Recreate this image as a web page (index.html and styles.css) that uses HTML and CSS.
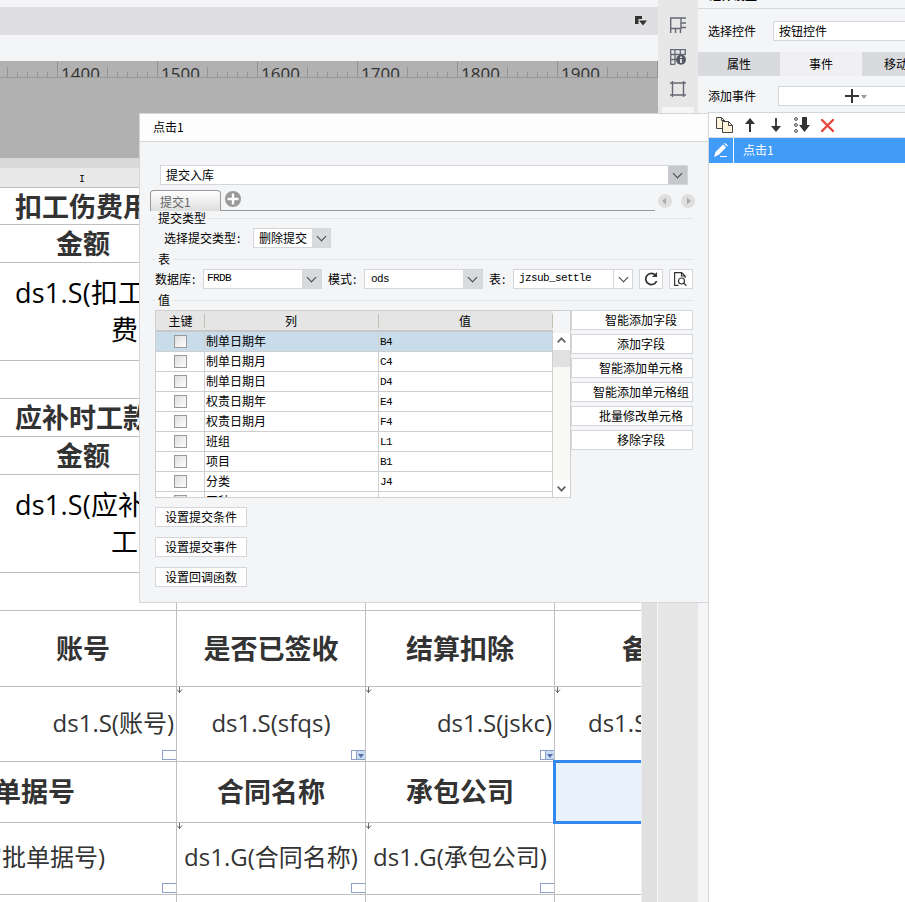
FILE: index.html
```html
<!DOCTYPE html>
<html lang="zh-CN">
<head>
<meta charset="utf-8">
<title>点击1</title>
<link rel="stylesheet" href="styles.css">
</head>
<body>
<div class="app">
  <main class="designer">
    <div class="strip-top"></div>
    <div class="strip-tools">
      <svg width="14" height="12" viewBox="0 0 14 12"><path d="M1 1h7v3H4.500V9H1z" fill="#333"/><path d="M5 5.500h8L9 10.500z" fill="#333"/></svg>
    </div>
    <div class="strip-gap"></div>
    <div class="ruler">
      <span>1400</span><span>1500</span><span>1600</span><span>1700</span><span>1800</span><span>1900</span>
    </div>
    <div class="canvas-gap"></div>
    <div class="sheet-edge"></div>
    <div class="column-head">I</div>
    <div class="sheet-wrap">
      <div class="sheet">
        <div class="row r37"><b class="from-left">扣工伤费用</b></div>
        <div class="row r38"><b class="amount">金额</b></div>
        <div class="row r98 formula"><p>ds1.S(扣工伤</p><p class="second">费)</p></div>
        <div class="row r38"></div>
        <div class="row r38"><b class="from-left">应补时工款</b></div>
        <div class="row r38"><b class="amount">金额</b></div>
        <div class="row r98 formula"><p>ds1.S(应补时</p><p class="second">工)</p></div>
        <div class="row r38 cols"><i></i><i></i><i></i><i></i></div>
        <div class="row r76 cols">
          <div class="cell shift"><b>账号</b></div><div class="cell"><b>是否已签收</b></div><div class="cell"><b>结算扣除</b></div><div class="cell"><b>备注</b></div>
        </div>
        <div class="row r75 cols value-row">
          <div class="cell right">ds1.S(账号)<span class="widget"></span></div>
          <div class="cell">ds1.S(sfqs)<svg class="expand" width="6" height="6"><path d="M2.500 0v6M0 2.500L2.500 5.500l2.500-3" fill="none" stroke="#666"/></svg><span class="widget drop"></span></div>
          <div class="cell right">ds1.S(jskc)<svg class="expand" width="6" height="6"><path d="M2.500 0v6M0 2.500L2.500 5.500l2.500-3" fill="none" stroke="#666"/></svg><span class="widget drop"></span></div>
          <div class="cell note">ds1.S(bz)<svg class="expand" width="6" height="6"><path d="M2.500 0v6M0 2.500L2.500 5.500l2.500-3" fill="none" stroke="#666"/></svg></div>
        </div>
        <div class="row r61 cols">
          <div class="cell bill"><b>单据号</b></div><div class="cell"><b>合同名称</b></div><div class="cell"><b>承包公司</b></div><div class="cell selected"></div>
        </div>
        <div class="row r72 cols value-row">
          <div class="cell bill-value">审批单据号)<span class="widget"></span></div>
          <div class="cell">ds1.G(合同名称)<svg class="expand" width="6" height="6"><path d="M2.500 0v6M0 2.500L2.500 5.500l2.500-3" fill="none" stroke="#666"/></svg><span class="widget"></span></div>
          <div class="cell">ds1.G(承包公司)<svg class="expand" width="6" height="6"><path d="M2.500 0v6M0 2.500L2.500 5.500l2.500-3" fill="none" stroke="#666"/></svg><span class="widget"></span></div>
          <div class="cell"></div>
        </div>
        <div class="row cols rest"><i></i><i></i><i></i><i></i></div>
      </div>
      <div class="sheet-scroll"></div>
    </div>
  </main>

  <aside class="rail">
    <svg width="16" height="17" viewBox="0 0 16 17" fill="none" stroke="#666974" stroke-width="1.400"><path d="M.7 16V1H16M11 1v11M.7 11.500H11M5.500 11.500V16M10.500 12v4M11 6h5M11 10.500h5"/></svg>
    <svg width="16" height="16" viewBox="0 0 16 16" fill="none" stroke="#666974" stroke-width="1.300"><path d="M5 15.300H.7V.7h14.600V6M.7 5.500h14.600M.7 10.500H6M5 .7v14.600M10.300.7V5"/><circle cx="11" cy="10.800" r="5" fill="#555862" stroke="none"/><path d="M11 7.500v1.400M11 10v4" stroke="#fff" stroke-width="1.600"/></svg>
    <svg width="16" height="16" viewBox="0 0 16 16" fill="none" stroke="#666974" stroke-width="1.400"><path d="M2.500 0v16M13.500 0v16M0 2h16M0 14h16"/></svg>
    <div class="rail-slot"></div>
  </aside>

  <aside class="panel">
    <div class="panel-title">组件设置</div>
    <div class="prop"><label>选择控件</label><div class="field control">按钮控件</div></div>
    <nav class="tabs"><span>属性</span><span class="on">事件</span><span class="cut">移动端</span></nav>
    <div class="prop add"><label>添加事件</label><div class="field plus"><svg width="22" height="14" viewBox="0 0 22 14"><path d="M0 7h14M7 0v14" stroke="#333" stroke-width="2"/><path d="M16 6h6l-3 4z" fill="#999"/></svg></div></div>
    <div class="events">
      <div class="event-tools">
        <svg width="17" height="16" viewBox="0 0 17 16" fill="#fff5dc" stroke="#444"><path d="M.5.5h5l3 3v8h-8z"/><path d="M5.500.5v3h3" fill="none"/><path d="M6.500 4.500h6l4 4v7h-10z"/><path d="M12.500 4.500v4h4" fill="none"/></svg>
        <svg class="up" width="10" height="14" viewBox="0 0 10 14"><path d="M5 2v12" stroke="#333" stroke-width="2"/><path d="M5 0l5 6H0z" fill="#333"/></svg>
        <svg class="down" width="10" height="14" viewBox="0 0 10 14"><path d="M5 0v12" stroke="#333" stroke-width="1.800"/><path d="M5 14L0 8h10z" fill="#333"/></svg>
        <svg class="bottom" width="16" height="16" viewBox="0 0 16 16"><g fill="none" stroke="#444"><circle cx="2" cy="2" r="1.400"/><circle cx="2" cy="8" r="1.400"/><circle cx="2" cy="14" r="1.400"/></g><path d="M8 0h5v8h3l-5.500 7L5 8h3z" fill="#333"/></svg>
        <svg class="remove" width="13" height="13" viewBox="0 0 13 13"><path d="M1 1l11 11M12 1L1 12" stroke="#e8463c" stroke-width="2.400" stroke-linecap="round"/></svg>
      </div>
      <div class="event">
        <span class="edit"><svg width="14" height="14" viewBox="0 0 14 14"><path d="M0 14l1.500-5L9 1.500l3 3L4.500 12z" fill="#fff"/><path d="M10 .8l1-.8 3 2.500-1 1z" fill="#fff"/><path d="M6 13.500h7" stroke="#fff"/></svg></span>
        <span class="name">点击1</span>
      </div>
    </div>
  </aside>

  <section class="dialog">
    <header>点击1</header>
    <div class="select wide"><span>提交入库</span><em></em></div>
    <div class="tab-strip">
      <span class="tab">提交1</span>
      <div class="tab-line"><svg width="16" height="16" viewBox="0 0 16 16"><circle cx="8" cy="8" r="8" fill="#999"/><path d="M2.500 8h11M8 2.500v11" stroke="#fff" stroke-width="2.400"/></svg></div>
      <svg class="nav prev" width="14" height="14" viewBox="0 0 14 14"><circle cx="7" cy="7" r="7" fill="#dfdfdf"/><path d="M8 3.500v7L4 7z" fill="#aaa"/></svg>
      <svg class="nav" width="14" height="14" viewBox="0 0 14 14"><circle cx="7" cy="7" r="7" fill="#dfdfdf"/><path d="M6 3.500v7L10 7z" fill="#aaa"/></svg>
    </div>
    <div class="legend"><span>提交类型</span></div>
    <div class="line type-line"><label>选择提交类型<s>:</s></label><div class="select type"><span>删除提交</span><em></em></div></div>
    <div class="legend second-legend"><span>表</span></div>
    <div class="line db-line">
      <label>数据库<s>:</s></label><div class="select db"><span class="mono">FRDB</span><em></em></div>
      <label class="mode">模式<s>:</s></label><div class="select schema"><span class="mono">ods</span><em></em></div>
      <label class="table-label">表<s>:</s></label><div class="select tbl"><span class="mono">jzsub_settle</span><em></em></div>
      <button><svg width="14" height="14" viewBox="0 0 14 14"><path d="M11.500 3.200A5.600 5.600 0 1 0 12.600 9" fill="none" stroke="#333" stroke-width="1.700"/><path d="M13 0v5H8z" fill="#333"/></svg></button>
      <button class="preview"><svg width="13" height="14" viewBox="0 0 13 14" fill="none" stroke="#333" stroke-width="1.200"><path d="M4.500 13.400H.6V.6h7l3.500 3.500v2M7.500.5V4H11"/><circle cx="7.500" cy="9" r="3"/><path d="M9.500 11l3 2.700"/></svg></button>
    </div>
    <div class="legend third-legend"><span>值</span></div>
    <div class="values">
      <div class="table">
        <div class="grid">
          <div class="tr th"><span>主键</span><span>列</span><span>值</span></div>
          <div class="tr active"><span><u></u></span><span>制单日期年</span><span>B4</span></div>
          <div class="tr"><span><u></u></span><span>制单日期月</span><span>C4</span></div>
          <div class="tr"><span><u></u></span><span>制单日期日</span><span>D4</span></div>
          <div class="tr"><span><u></u></span><span>权责日期年</span><span>E4</span></div>
          <div class="tr"><span><u></u></span><span>权责日期月</span><span>F4</span></div>
          <div class="tr"><span><u></u></span><span>班组</span><span>L1</span></div>
          <div class="tr"><span><u></u></span><span>项目</span><span>B1</span></div>
          <div class="tr"><span><u></u></span><span>分类</span><span>J4</span></div>
          <div class="tr"><span><u></u></span><span>工种</span><span></span></div>
        </div>
        <div class="scroll">
          <div class="scroll-head"></div>
          <div class="arrow"><svg width="9" height="6" viewBox="0 0 9 6"><path d="M.7 5.300l3.800-4 3.800 4" fill="none" stroke="#666" stroke-width="1.800"/></svg></div>
          <div class="thumb"></div>
          <div class="track"></div>
          <div class="arrow"><svg width="9" height="6" viewBox="0 0 9 6"><path d="M.7.700l3.800 4 3.800-4" fill="none" stroke="#666" stroke-width="1.800"/></svg></div>
        </div>
      </div>
      <div class="actions">
        <button>智能添加字段</button><button>添加字段</button><button>智能添加单元格</button><button>智能添加单元格组</button><button>批量修改单元格</button><button>移除字段</button>
      </div>
    </div>
    <div class="settings"><button>设置提交条件</button><button>设置提交事件</button><button>设置回调函数</button></div>
  </section>
</div>
</body>
</html>
```
FILE: styles.css
```css
* { box-sizing: border-box; }
body { margin: 0; overflow: hidden; font: 12px/14px "Noto Sans CJK SC", sans-serif; color: #000; }
svg { display: block; flex: none; }
p { margin: 0; }
.app { position: relative; display: flex; width: 905px; height: 902px; overflow: hidden; background: #f4f5f7; }

.designer { width: 658px; flex: none; display: flex; flex-direction: column; }
.strip-top { height: 7px; background: #f4f4f7; }
.strip-tools { height: 28px; background: #dfdfe1; display: flex; justify-content: flex-end; padding: 8px 10px 0 0; }
.strip-gap { height: 26px; background: #f4f5f7; }
.ruler {
  height: 17px; overflow: hidden; padding-left: 61px; display: flex; border-bottom: 1px solid #999;
  background:
    repeating-linear-gradient(90deg, #949494 0 1px, transparent 1px 100px) 57px 0 / 601px 16px no-repeat,
    repeating-linear-gradient(90deg, #949494 0 1px, transparent 1px 50px) 7px 6px / 651px 10px no-repeat,
    repeating-linear-gradient(90deg, #949494 0 1px, transparent 1px 10px) 7px 11px / 651px 5px no-repeat,
    #b1b1b1;
}
.ruler span { flex: none; width: 100px; font: 500 17px/17px "Open Sans", sans-serif; padding-top: 4px; color: #333; }
.canvas-gap { height: 80px; background: #b1b1b1; }
.sheet-edge { height: 10px; background: #d9d9d9; }
.column-head { height: 20px; background: #e8e8e8; border-bottom: 1px solid #bfbfbf; padding: 6px 0 0 79px; font: 10px/12px "Liberation Mono", monospace; }
.sheet-wrap { flex: 1; display: flex; min-height: 0; }
.sheet { width: 641px; flex: none; overflow: hidden; background: #fff; font: 24px/36px "Open Sans", "Noto Sans CJK SC", sans-serif; color: #333; }
.sheet b { font-size: 27px; font-weight: 700; line-height: 38px; white-space: nowrap; }
.sheet-scroll { width: 17px; background: #e0e0e0; border-left: 1px solid #eee; border-right: 1px solid #f7f7f7; }
.row { border-bottom: 1px solid #bfbfbf; white-space: nowrap; overflow: hidden; }
.r37 { height: 37px; } .r38 { height: 38px; } .r98 { height: 98px; } .r76 { height: 76px; }
.r75 { height: 75px; } .r61 { height: 61px; } .r72 { height: 72px; } .rest { height: 10px; }
.from-left { margin-left: 15px; }
.amount { margin-left: 56px; }
.formula { padding: 12px 0 0 15px; font-size: 27px; letter-spacing: .2px; color: #000; }
.formula p { height: 37px; }
.formula .second { padding-left: 96px; }
.cols { display: grid; grid-template-columns: 177px 189px 189px 189px; overflow: visible; }
.cols > * { border-right: 1px solid #bfbfbf; }
.cell { position: relative; display: flex; align-items: center; justify-content: center; min-width: 0; }
.value-row .cell { padding-bottom: 3px; }
.cell.right { justify-content: flex-end; padding-right: 2px; }
.cell.shift { justify-content: flex-end; padding-right: 66px; }
.cell.note { justify-content: flex-start; padding-left: 33px; }
.cell.bill { justify-content: flex-start; margin-left: -6px; }
.cell.bill-value { justify-content: flex-start; margin-left: -22px; }
.selected { background: #e8f2fc; border: 3px solid #3388f0 !important; margin: -2px 0 -2px -2px; z-index: 1; }
.expand { position: absolute; left: 0; top: 0; }
.widget { position: absolute; right: 0; bottom: 1px; width: 14px; height: 10px; border: 1px solid #8aa0c8; border-right: 0; background: #fff; }
.drop::before { content: ""; position: absolute; right: 0; top: 0; width: 8px; height: 8px; background: #c9daf3; border-left: 1px solid #8aa0c8; }
.drop::after { content: ""; position: absolute; right: 1px; top: 3px; border: 3px solid transparent; border-top: 4px solid #5870a8; border-bottom: 0; }

.rail { width: 40px; flex: none; background: #e7e7e8; display: flex; flex-direction: column; align-items: center; padding-top: 17px; gap: 16px; }
.rail svg:nth-child(2) { margin-top: -1px; }
.rail-slot { width: 32px; height: 6px; margin-top: -6px; background: #f4f5f7; }

.panel { width: 207px; flex: none; display: flex; flex-direction: column; overflow: hidden; }
.panel-title { height: 9px; border-bottom: 1px solid #d5d6da; padding-left: 11px; display: flex; align-items: flex-end; overflow: hidden; line-height: 17px; padding-bottom: 5px; font-weight: 700; }
.prop { display: flex; align-items: center; padding-left: 10px; margin-top: 12px; height: 20px; white-space: nowrap; }
.prop label { width: 65px; }
.field { flex: 1; height: 20px; background: #fff; border: 1px solid #d5d6da; border-right: 0; padding: 2px 5px; }
.tabs { display: flex; height: 24px; margin-top: 11px; }
.tabs span { width: 82px; flex: none; background: #d8dade; text-align: center; line-height: 24px; }
.tabs .on { background: #f0f0f2; }
.tabs .cut { text-align: left; padding-left: 22px; }
.add { margin-top: 10px; }
.add label { width: 70px; }
.plus { padding: 2px 0 0 66px; }
.events { flex: 1; margin: 6px 0 0 10px; background: #fff; border: 1px solid #d5d6da; border-width: 1px 0 0 1px; }
.event-tools { display: flex; height: 25px; align-items: center; padding-left: 7px; border-bottom: 1px solid #ddd; }
.event-tools .up { margin-left: 12px; }
.event-tools .down { margin-left: 16px; }
.event-tools .bottom { margin-left: 13px; }
.event-tools .remove { margin-left: 11px; }
.event { display: flex; height: 25px; background: #419bf9; color: #fff; line-height: 24px; }
.edit { width: 25px; border-right: 1px solid #fff; padding: 5px 0 0 5px; }
.name { padding-left: 9px; }

.dialog { position: absolute; left: 139px; top: 113px; width: 570px; height: 490px; background: #f4f5f7; border: 1px solid #d5d6da; display: flex; flex-direction: column; }
.dialog header { height: 28px; background: #fdfdfd; border-bottom: 1px solid #d5d6da; padding: 6px 13px; }
.select { display: flex; height: 20px; background: #fff; border: 1px solid #d5d6da; white-space: nowrap; }
.select span { flex: 1; padding: 2px 5px; }
.select em { width: 19px; background: #d8dade; display: flex; align-items: center; justify-content: center; }
.select em::before { content: ""; width: 6px; height: 6px; border: solid #444; border-width: 0 1.300px 1.300px 0; transform: translateY(-2px) rotate(45deg); }
.wide { margin: 23px 0 0 20px; width: 528px; }
.wide em { background: #c6c8cc; }
.select .mono { font: 11px/13px "Liberation Mono", monospace; letter-spacing: -.6px; }
.db .mono { padding-left: 3px; }
.schema .mono { padding: 3px 6px; }
.tab-strip { display: flex; margin: 5px 0 0 10px; height: 21px; }
.tab { width: 71px; border: 1px solid #999; border-bottom: 0; border-radius: 4px 4px 0 0; background: linear-gradient(#fff, #dedede); color: #666; padding: 4px 0 0 9px; height: 21px; }
.tab-line { width: 434px; height: 21px; border-bottom: 1px solid #999; padding: 1px 0 0 4px; }
.nav { margin: 4px 0 0 9px; }
.nav.prev { margin-left: 3px; }
.legend { height: 14px; display: flex; align-items: center; margin: 0 15px 0 12px; line-height: 14px; }
.legend::before { content: ""; width: 3px; height: 1px; background: #e2e3e6; margin-right: 3px; }
.legend::after { content: ""; flex: 1; height: 1px; background: #e2e3e6; margin-left: 3px; }
.line { display: flex; align-items: center; height: 20px; white-space: nowrap; }
s { text-decoration: none; display: inline-block; width: 6px; padding-left: 1px; }
.type-line { margin: 3px 0 0 24px; }
.type { width: 78px; margin-left: 11px; }
.second-legend { margin-top: 4px; }
.db-line { margin: 3px 0 0 15px; }
.db { width: 119px; margin-left: 6px; }
.mode { margin-left: 6px; }
.schema { width: 119px; margin-left: 6px; }
.table-label { margin-left: 6px; }
.tbl { width: 120px; margin-left: 6px; }
.tbl em { background: #fff; border-left: 1px solid #d5d6da; }
button { font: inherit; color: inherit; background: #fff; border: 1px solid #d5d6da; padding: 0; white-space: nowrap; }
.db-line button { width: 24px; height: 20px; margin-left: 6px; padding: 2px 4px; }
.third-legend { margin-top: 4px; }
.values { display: flex; margin: 3px 0 0 15px; }
.table { display: flex; width: 416px; height: 188px; border: 1px solid #cfcfcf; overflow: hidden; }
.grid { width: 397px; flex: none; }
.tr { display: grid; grid-template-columns: 49px 174px 174px; height: 20px; border-bottom: 1px solid #cfcfcf; background: #fff; }
.tr span { border-right: 1px solid #cfcfcf; padding: 2px 0 0 1px; }
.tr span:first-child { padding: 3px 0 0 18px; }
.tr span:last-child { font: 11px/14px "Liberation Mono", monospace; letter-spacing: -.6px; padding-top: 3px; }
.tr u { display: block; width: 13px; height: 13px; border: 1px solid #999; background: linear-gradient(135deg, #ddd, #fff); }
.tr.active { background: #c8dcea; }
.tr.th { height: 21px; background: #e5e5e5; border-bottom: 2px solid #c8c8c8; text-align: center; }
.tr.th span, .tr.th span:first-child, .tr.th span:last-child { padding: 3px 2px 0 0; border: 0; font: inherit; letter-spacing: 0; background: linear-gradient(#c3bfb2, #c3bfb2) right 3px / 1px 14px no-repeat; }
.tr.th span:first-child { padding-right: 0; }
.scroll { width: 17px; display: flex; flex-direction: column; }
.scroll-head { height: 22px; background: #f4f5f7; }
.arrow { height: 17px; background: #fff; display: flex; align-items: center; justify-content: center; }
.scroll-head + .arrow { padding-bottom: 3px; }
.thumb { height: 17px; background: #e1e1e1; }
.track { flex: 1; background: #f8f8f7; }
.actions { width: 122px; display: flex; flex-direction: column; gap: 4px; }
.actions button { height: 20px; padding-left: 18px; }
.settings { display: flex; flex-direction: column; gap: 10px; margin: 9px 0 0 15px; }
.settings button { width: 92px; height: 20px; }
```
